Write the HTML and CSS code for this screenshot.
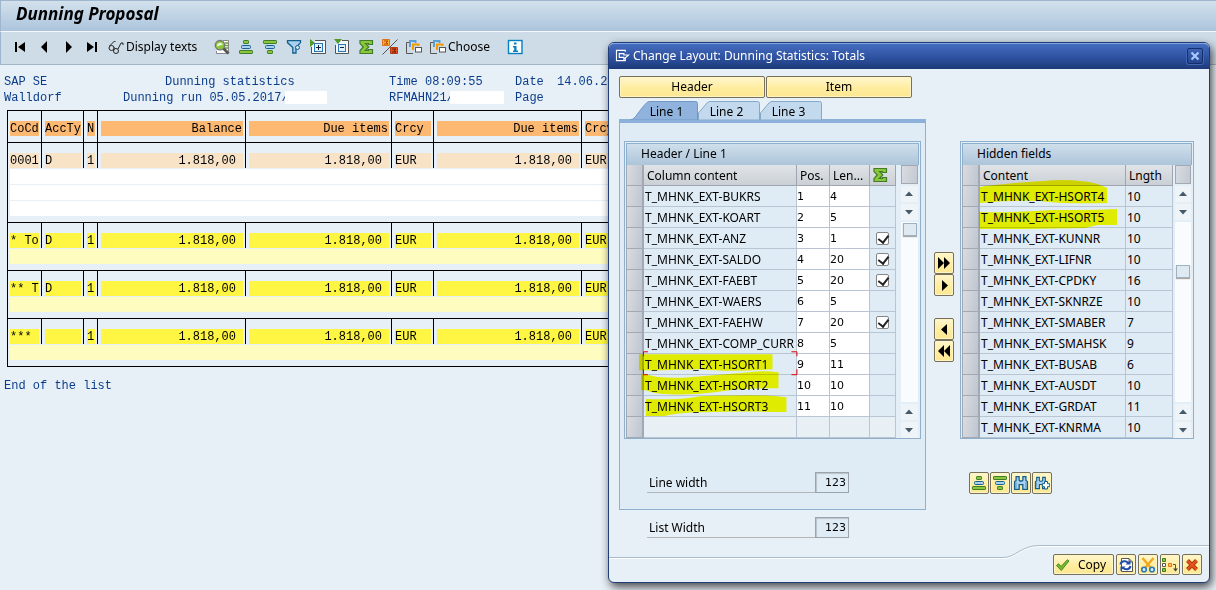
FILE: index.html
```html
<!DOCTYPE html>
<html lang="en">
<head>
<meta charset="utf-8">
<title>Dunning Proposal</title>
<link rel="stylesheet" href="styles.css">
</head>
<body>
<svg class="defs" aria-hidden="true">
  <defs>
    <symbol id="asc" viewBox="0 0 16 16"><g stroke-width="1"><rect x="5.500" y="1.500" width="5" height="3" rx=".6" fill="#8cc63a" stroke="#3f7d2a"/><rect x="3.500" y="6.500" width="9" height="3" rx="1" fill="#a9d0ee" stroke="#13608f"/><rect x="1.500" y="11.500" width="13" height="3" rx=".6" fill="#8cc63a" stroke="#3f7d2a"/></g></symbol>
    <symbol id="desc" viewBox="0 0 16 16"><g stroke-width="1"><rect x="1.500" y="1.500" width="13" height="3" rx=".6" fill="#8cc63a" stroke="#3f7d2a"/><rect x="3.500" y="6.500" width="9" height="3" rx="1" fill="#a9d0ee" stroke="#13608f"/><rect x="5.500" y="11.500" width="5" height="3" rx=".6" fill="#8cc63a" stroke="#3f7d2a"/></g></symbol>
    <symbol id="sum" viewBox="0 0 16 16"><path d="M2 1.500h12.500v4h-4v-.8H7.600l3.200 3.300-3.400 3.400h3.100v-.9h4v4H2v-3L5.300 8 2 4.600z" fill="#8cc63a" stroke="#3f7d2a" stroke-width="1.200"/></symbol>
    <symbol id="layout" viewBox="0 0 16 16"><path d="M3 3.500H.5v11H7" fill="none" stroke="#555"/><path d="M4 8V2H9.500V4" fill="none" stroke="#5aa0d8" stroke-width="2"/><path d="M7 11V5.500H12.500V7" fill="none" stroke="#f39a00" stroke-width="2"/><rect x="9.500" y="8.500" width="6" height="4.500" fill="#fff" stroke="#555"/></symbol>
    <symbol id="bino" viewBox="0 0 16 16"><path d="M1.600 14.400V6.500l1.500-1V1.600h3v3.500l.9.900h2l.9-.9V1.600h3v3.900l1.500 1v7.900H9.800V9.700H6.200v4.700z" fill="#a9d0ee" stroke="#13608f" stroke-width="1.300"/><path d="M3 7v6M13 7v6" stroke="#5b9bcc"/></symbol>
    <symbol id="up" viewBox="0 0 16 16"><path d="M4 10l4-4.500L12 10z" fill="#44596a"/></symbol>
    <symbol id="down" viewBox="0 0 16 16"><path d="M4 6l4 4.500L12 6z" fill="#44596a"/></symbol>
  </defs>
</svg>

<main class="desktop">
  <h1 class="title">Dunning Proposal</h1>
  <nav class="toolbar" aria-label="Application toolbar">
    <button class="tool" aria-label="First column"><svg viewBox="0 0 16 16"><path d="M3 3h2v10H3zM13 3v10L6 8z"/></svg></button>
    <button class="tool" aria-label="Column left"><svg viewBox="0 0 16 16"><path d="M11 2v12L5 8z"/></svg></button>
    <button class="tool" aria-label="Column right"><svg viewBox="0 0 16 16"><path d="M6 2v12l6-6z"/></svg></button>
    <button class="tool" aria-label="Last column"><svg viewBox="0 0 16 16"><path d="M11 3h2v10h-2zM3 3v10l7-5z"/></svg></button>
    <button class="tool wide display"><svg viewBox="0 0 16 16"><g fill="none" stroke="#222" stroke-width="1"><circle cx="3.500" cy="9" r="2.500"/><circle cx="8" cy="12" r="2.500"/><path d="M1.500 7l5-5 1 1M10 10l3-6 2 0v2M6 9l1 0"/></g></svg>Display texts</button>
    <button class="tool" aria-label="Details"><svg viewBox="0 0 16 16"><path d="M9 1.500h5.500v13H2.500V12" fill="#fff" stroke="#888"/><path d="M11 4h3M11 6.500h3M11 9h3" stroke="#62a82d" stroke-width="1.300"/><circle cx="6" cy="6.200" r="4.700" fill="#8cc63a" stroke="#777" stroke-width="1.400"/><path d="M3 7.500a3.200 3.200 0 0 1 6-2z" fill="#e8f5d8"/><path d="M9.500 9.500l5 5" stroke="#555" stroke-width="2.800"/></svg></button>
    <button class="tool" aria-label="Sort ascending"><svg><use href="#asc"/></svg></button>
    <button class="tool" aria-label="Sort descending"><svg><use href="#desc"/></svg></button>
    <button class="tool" aria-label="Filter"><svg viewBox="0 0 16 16"><path d="M1.500 1.600h13v2L10 8.500V14H6.800V8.500L1.500 3.600z" fill="#a9d0ee" stroke="#13608f" stroke-width="1.300"/><circle cx="11.500" cy="8.500" r="2" fill="#cfe2f2" stroke="#13608f"/></svg></button>
    <button class="tool" aria-label="Expand"><svg viewBox="0 0 16 16"><path d="M5 1.500h10.500v13H1.500V8" fill="#f4f8fb" stroke="#555"/><path d="M0 0v8l5-4z" fill="#4f9a2a"/><rect x="4.500" y="4.500" width="8" height="8" fill="#e2f0fb" stroke="#2a75b5"/><path d="M8.500 6v5M6 8.500h5" stroke="#124"/></svg></button>
    <button class="tool" aria-label="Collapse"><svg viewBox="0 0 16 16"><path d="M8 1.500h6.500v13H1.500V6" fill="#f4f8fb" stroke="#555"/><path d="M0 0h8L4 5z" fill="#4f9a2a"/><rect x="4.500" y="5.500" width="7" height="7" fill="#e2f0fb" stroke="#2a75b5"/><path d="M6 8.500h4" stroke="#124"/></svg></button>
    <button class="tool" aria-label="Total"><svg><use href="#sum"/></svg></button>
    <button class="tool" aria-label="Subtotal"><svg viewBox="0 0 16 16"><path d="M.5.500h7v6h-7z" fill="#ffb52b" stroke="#e2701c"/><path d="M2 2h4L4 3.500 6 5H2" fill="none" stroke="#b53a10"/><path d="M8.500 8.500h7v6h-7z" fill="#e2501d" stroke="#b53a10"/><path d="M10 10h4l-2 1.500 2 1.500h-4" fill="none" stroke="#6b1b06"/><path d="M15.500.5L.5 15.500" stroke="#555"/></svg></button>
    <button class="tool" aria-label="Change layout"><svg><use href="#layout"/></svg></button>
    <button class="tool wide choose"><svg><use href="#layout"/></svg>Choose</button>
    <button class="tool" aria-label="Information"><svg viewBox="0 0 16 16"><rect x="1.500" y="1.500" width="13.500" height="13" fill="#fff" stroke="#0780c0" stroke-width="1.400"/><path d="M7 3.500h2.500v2H7zM6 7h3.500v4.500H11V13H6v-1.500h1.200V8.500H6z" fill="#0780c0"/></svg></button>
  </nav>

  <section class="report">
    <div class="report-head">
      <span>SAP SE</span><span class="centered">Dunning statistics</span><span>Time 08:09:55</span><span>Date</span><span>14.06.2017</span>
      <span>Walldorf</span><span>Dunning run 05.05.2017/<i class="blank"></i></span><span>RFMAHN21/<i class="blank long"></i></span><span>Page</span>
    </div>
    <table class="list">
      <colgroup><col class="w-co"><col class="w-cur"><col class="w-n"><col class="w-amt"><col class="w-due"><col class="w-cur"><col class="w-amt"><col class="w-cur"></colgroup>
      <thead>
        <tr class="line head"><th><b>CoCd</b></th><th><b>AccTy</b></th><th><b>N</b></th><th class="num"><b>Balance</b></th><th class="num"><b>Due items</b></th><th><b>Crcy</b></th><th class="num"><b>Due items</b></th><th><b>Crcy</b></th></tr>
      </thead>
      <tbody>
        <tr class="line item"><td><b>0001</b></td><td><b>D</b></td><td><b>1</b></td><td class="num amt"><b>1.818,00</b></td><td class="num amt"><b>1.818,00</b></td><td><b>EUR</b></td><td class="num amt"><b>1.818,00</b></td><td><b>EUR</b></td></tr>
        <tr class="fill"><td colspan="8"><b></b></td></tr>
        <tr class="fill"><td colspan="8"><b></b></td></tr>
        <tr class="fill end"><td colspan="8"><b></b></td></tr>
        <tr class="line total"><td><b>* To</b></td><td><b>D</b></td><td><b>1</b></td><td class="num amt"><b>1.818,00</b></td><td class="num amt"><b>1.818,00</b></td><td><b>EUR</b></td><td class="num amt"><b>1.818,00</b></td><td><b>EUR</b></td></tr>
        <tr class="fill pale end"><td colspan="8"><b></b></td></tr>
        <tr class="line total"><td><b>** T</b></td><td><b>D</b></td><td><b>1</b></td><td class="num amt"><b>1.818,00</b></td><td class="num amt"><b>1.818,00</b></td><td><b>EUR</b></td><td class="num amt"><b>1.818,00</b></td><td><b>EUR</b></td></tr>
        <tr class="fill pale end"><td colspan="8"><b></b></td></tr>
        <tr class="line total"><td><b>***</b></td><td><b></b></td><td><b>1</b></td><td class="num amt"><b>1.818,00</b></td><td class="num amt"><b>1.818,00</b></td><td><b>EUR</b></td><td class="num amt"><b>1.818,00</b></td><td><b>EUR</b></td></tr>
        <tr class="fill pale end"><td colspan="8"><b></b></td></tr>
      </tbody>
    </table>
    <p class="list-end">End of the list</p>
  </section>

  <section class="dialog" role="dialog" aria-labelledby="dlg-title">
    <header class="dialog-bar">
      <svg class="bar-icon" viewBox="0 0 16 14"><path d="M11 3V1.500H1.500v11H11V10M4.500 5v4h5v2l5-4.500H9.500V5z" fill="none" stroke="#fff" stroke-width="1.200"/></svg>
      <h2 id="dlg-title">Change Layout: Dunning Statistics: Totals</h2>
      <button class="close" aria-label="Close"><svg viewBox="0 0 10 10"><path d="M1.500 1.500l7 7M8.500 1.500l-7 7" stroke="#a9c8ff" stroke-width="2.200"/></svg></button>
    </header>
    <div class="dialog-body">
      <div class="left">
        <div class="switches"><button class="gold">Header</button><button class="gold">Item</button></div>
        <div class="tabs" role="tablist">
          <button class="tab active" role="tab" aria-selected="true"><svg viewBox="0 0 68 19" preserveAspectRatio="none"><path d="M.5 19C6 18 8 10 17 1.500Q18 .5 20 .5H65.500Q67.500.5 67.500 2.500V19z" fill="#8fb3dc" stroke="#6f98c4"/></svg><span>Line 1</span></button>
          <button class="tab" role="tab" aria-selected="false"><svg viewBox="0 0 62 19" preserveAspectRatio="none"><path d="M.5 19V12L9 2Q10.500.5 12 .5H59.500Q61.500.5 61.500 2.500V19z" fill="#c3d9ed" stroke="#86a9ca"/></svg><span>Line 2</span></button>
          <button class="tab" role="tab" aria-selected="false"><svg viewBox="0 0 62 19" preserveAspectRatio="none"><path d="M.5 19V12L9 2Q10.500.5 12 .5H59.500Q61.500.5 61.500 2.500V19z" fill="#c3d9ed" stroke="#86a9ca"/></svg><span>Line 3</span></button>
        </div>
        <div class="panel">
          <div class="box">
            <h3>Header / Line 1</h3>
            <div class="box-row">
              <table class="grid shown">
                <colgroup><col class="c-sel"><col><col class="c-pos"><col class="c-len"><col class="c-sum"></colgroup>
                <thead><tr><th class="sel"></th><th>Column content</th><th>Pos.</th><th>Len...</th><th class="chk"><svg class="sum" role="img" aria-label="Total"><use href="#sum"/></svg></th></tr></thead>
                <tbody>
                  <tr><td class="sel"></td><td>T_MHNK_EXT-BUKRS</td><td class="edit"><input aria-label="Position BUKRS" value="1"></td><td class="edit"><input aria-label="Length BUKRS" value="4"></td><td></td></tr>
                  <tr><td class="sel"></td><td>T_MHNK_EXT-KOART</td><td class="edit"><input aria-label="Position KOART" value="2"></td><td class="edit"><input aria-label="Length KOART" value="5"></td><td></td></tr>
                  <tr><td class="sel"></td><td>T_MHNK_EXT-ANZ</td><td class="edit"><input aria-label="Position ANZ" value="3"></td><td class="edit"><input aria-label="Length ANZ" value="1"></td><td class="chk"><input type="checkbox" checked aria-label="Total ANZ"></td></tr>
                  <tr><td class="sel"></td><td>T_MHNK_EXT-SALDO</td><td class="edit"><input aria-label="Position SALDO" value="4"></td><td class="edit"><input aria-label="Length SALDO" value="20"></td><td class="chk"><input type="checkbox" checked aria-label="Total SALDO"></td></tr>
                  <tr><td class="sel"></td><td>T_MHNK_EXT-FAEBT</td><td class="edit"><input aria-label="Position FAEBT" value="5"></td><td class="edit"><input aria-label="Length FAEBT" value="20"></td><td class="chk"><input type="checkbox" checked aria-label="Total FAEBT"></td></tr>
                  <tr><td class="sel"></td><td>T_MHNK_EXT-WAERS</td><td class="edit"><input aria-label="Position WAERS" value="6"></td><td class="edit"><input aria-label="Length WAERS" value="5"></td><td></td></tr>
                  <tr><td class="sel"></td><td>T_MHNK_EXT-FAEHW</td><td class="edit"><input aria-label="Position FAEHW" value="7"></td><td class="edit"><input aria-label="Length FAEHW" value="20"></td><td class="chk"><input type="checkbox" checked aria-label="Total FAEHW"></td></tr>
                  <tr><td class="sel"></td><td>T_MHNK_EXT-COMP_CURR</td><td class="edit"><input aria-label="Position COMP_CURR" value="8"></td><td class="edit"><input aria-label="Length COMP_CURR" value="5"></td><td></td></tr>
                  <tr><td class="sel"></td><td>T_MHNK_EXT-HSORT1</td><td class="edit"><input aria-label="Position HSORT1" value="9"></td><td class="edit"><input aria-label="Length HSORT1" value="11"></td><td></td></tr>
                  <tr><td class="sel"></td><td>T_MHNK_EXT-HSORT2</td><td class="edit"><input aria-label="Position HSORT2" value="10"></td><td class="edit"><input aria-label="Length HSORT2" value="10"></td><td></td></tr>
                  <tr><td class="sel"></td><td>T_MHNK_EXT-HSORT3</td><td class="edit"><input aria-label="Position HSORT3" value="11"></td><td class="edit"><input aria-label="Length HSORT3" value="10"></td><td></td></tr>
                  <tr class="empty"><td class="sel"></td><td></td><td></td><td></td><td></td></tr>
                </tbody>
              </table>
              <div class="scroll">
                <div class="corner"></div>
                <button aria-label="Scroll up"><svg><use href="#up"/></svg></button><button aria-label="Scroll down"><svg><use href="#down"/></svg></button>
                <div class="track"><div class="thumb"></div></div>
                <button aria-label="Previous row"><svg><use href="#up"/></svg></button><button aria-label="Next row"><svg><use href="#down"/></svg></button>
              </div>
            </div>
            <svg class="marker" viewBox="624 141 298 299" aria-hidden="true"><path d="M639 355H773V370Q730 373 700 370L660 371H639z"/><path d="M641 375H646Q660 380 690 378L750 373Q765 371 779 373V389Q740 389 715 393Q690 396 670 395Q655 395 646 391H641z"/><path d="M646 400Q680 401 700 397Q730 396 750 396Q770 396 787 398V413Q740 412 715 413Q680 413 665 417H646z"/></svg>
            <svg class="focus" viewBox="624 141 298 299" aria-hidden="true"><path d="M643.500 357V352.500H648M792 352.500H797.500V357M797.500 370V375.500H792M648 375.500H643.500V370" fill="none" stroke="#e00000"/></svg>
          </div>
          <div class="field"><label for="line-width">Line width</label><input id="line-width" value="123" readonly></div>
        </div>
        <div class="field outer"><label for="list-width">List Width</label><input id="list-width" value="123" readonly></div>
      </div>

      <div class="movers">
        <button class="gold ico" aria-label="Hide all"><svg viewBox="0 0 16 16"><path d="M2 2v12l6-6zM8 2v12l6-6z"/></svg></button>
        <button class="gold ico" aria-label="Hide field"><svg viewBox="0 0 16 16"><path d="M6 3v11l6-5.500z"/></svg></button>
        <button class="gold ico apart" aria-label="Show field"><svg viewBox="0 0 16 16"><path d="M11 3v11L5 8.500z"/></svg></button>
        <button class="gold ico" aria-label="Show all"><svg viewBox="0 0 16 16"><path d="M8 2v12L2 8zM14 2v12L8 8z"/></svg></button>
      </div>

      <div class="right">
        <div class="box">
          <h3>Hidden fields</h3>
          <div class="box-row">
            <table class="grid">
              <colgroup><col class="c-sel"><col><col class="c-lng"></colgroup>
              <thead><tr><th class="sel"></th><th>Content</th><th>Lngth</th></tr></thead>
              <tbody>
                <tr><td class="sel"></td><td>T_MHNK_EXT-HSORT4</td><td>10</td></tr>
                <tr><td class="sel"></td><td>T_MHNK_EXT-HSORT5</td><td>10</td></tr>
                <tr><td class="sel"></td><td>T_MHNK_EXT-KUNNR</td><td>10</td></tr>
                <tr><td class="sel"></td><td>T_MHNK_EXT-LIFNR</td><td>10</td></tr>
                <tr><td class="sel"></td><td>T_MHNK_EXT-CPDKY</td><td>16</td></tr>
                <tr><td class="sel"></td><td>T_MHNK_EXT-SKNRZE</td><td>10</td></tr>
                <tr><td class="sel"></td><td>T_MHNK_EXT-SMABER</td><td>7</td></tr>
                <tr><td class="sel"></td><td>T_MHNK_EXT-SMAHSK</td><td>9</td></tr>
                <tr><td class="sel"></td><td>T_MHNK_EXT-BUSAB</td><td>6</td></tr>
                <tr><td class="sel"></td><td>T_MHNK_EXT-AUSDT</td><td>10</td></tr>
                <tr><td class="sel"></td><td>T_MHNK_EXT-GRDAT</td><td>11</td></tr>
                <tr><td class="sel"></td><td>T_MHNK_EXT-KNRMA</td><td>10</td></tr>
              </tbody>
            </table>
            <div class="scroll near">
              <div class="corner"></div>
              <button aria-label="Scroll up"><svg><use href="#up"/></svg></button><button aria-label="Scroll down"><svg><use href="#down"/></svg></button>
              <div class="track lower"><div class="thumb"></div></div>
              <button aria-label="Previous row"><svg><use href="#up"/></svg></button><button aria-label="Next row"><svg><use href="#down"/></svg></button>
            </div>
          </div>
          <svg class="marker" viewBox="960 141 234 299" aria-hidden="true"><path d="M980 187L985 186L1015 183L1043 181Q1065 179 1080 181Q1096 182 1107 188V203Q1060 204 1040 201Q1010 200 980 203z"/><path d="M979 212Q1000 213 1035 211L1055 210L1090 210L1117 209V225H1098L1085 228L1025 229H979z"/></svg>
        </div>
        <div class="finders">
          <button class="gold ico" aria-label="Sort ascending"><svg><use href="#asc"/></svg></button>
          <button class="gold ico" aria-label="Sort descending"><svg><use href="#desc"/></svg></button>
          <button class="gold ico" aria-label="Find"><svg><use href="#bino"/></svg></button>
          <button class="gold ico" aria-label="Find next"><svg viewBox="0 0 16 16"><use href="#bino" width="14" height="16"/><path d="M10.500 6.500h3v2.200h2.200v3h-2.200v2.200h-3v-2.200H8.300v-3h2.200z" fill="#fff" stroke="#13608f"/></svg></button>
        </div>
      </div>
    </div>
    <footer class="dialog-foot">
      <div class="edge" aria-hidden="true"><i class="low"></i><svg viewBox="0 0 36 14"><path d="M0 13.500C13 13.500 18 1.500 36 1.500" fill="none" stroke="#fff"/><path d="M0 12.500C13 12.500 18 .5 36 .5" fill="none" stroke="#a9bac9"/></svg><i class="high"></i></div>
      <button class="gold copy"><svg viewBox="0 0 16 16"><path d="M1.500 8.500l2.200-1.700 2.300 2.700 6.500-6.800L14 4 6.300 13.500z" fill="#77b82e" stroke="#4a8a22"/></svg>Copy</button>
      <button class="gold ico" aria-label="Refresh"><svg viewBox="0 0 16 16"><path d="M3.500 1.500H11l3.500 3.500v9.500h-11z" fill="#fff" stroke="#555"/><path d="M11 1.500V5h3.500" fill="none" stroke="#555"/><path d="M2.500 7.500C3 4 8 3 10 6M12.500 9C12 12.500 7 13.500 5 10.500" fill="none" stroke="#1f4fa8" stroke-width="2"/><path d="M7.500 7.500H12.500V3zM7.500 9.500H2.500V14z" fill="#1f4fa8"/></svg></button>
      <button class="gold ico" aria-label="Cut"><svg viewBox="0 0 16 16"><path d="M2.500 1l8.500 10M13.500 1L5 11" stroke="#f2a81d" stroke-width="2.400"/><circle cx="4" cy="12.500" r="2.300" fill="#dcecf8" stroke="#2a7ab8" stroke-width="1.600"/><circle cx="12" cy="12.500" r="2.300" fill="#dcecf8" stroke="#2a7ab8" stroke-width="1.600"/></svg></button>
      <button class="gold ico" aria-label="Move"><svg viewBox="0 0 16 16"><g fill="#8cc63a" stroke="#3f7d2a"><path d="M.5 1.500h3v3h-3zM.5 11.500h3v3h-3z"/></g><path d="M.5 6.500h3v3h-3z" fill="#fff" stroke="#555"/><path d="M6.500 6.500h3v3h-3z" fill="#ffd24d" stroke="#e2701c"/><path d="M11 7.500h2.500V13" fill="none" stroke="#555"/><path d="M11 11.500h5l-2.500 3z" fill="#444"/></svg></button>
      <button class="gold ico" aria-label="Cancel"><svg viewBox="0 0 16 16"><path d="M3.500 3.500l9 9M12.500 3.500l-9 9" stroke="#a8320c" stroke-width="4"/><path d="M3.500 3.500l9 9M12.500 3.500l-9 9" stroke="#e5541b" stroke-width="2.400"/></svg></button>
    </footer>
  </section>
</main>
</body>
</html>
```
FILE: styles.css
```css
* { box-sizing: border-box; }
body { margin: 0; font-family: "Noto Sans", sans-serif; font-size: 12px; line-height: 16px; color: #000; background: #e8f0f7; }
button, input { font: inherit; color: inherit; margin: 0; padding: 0; border: 0; background: none; border-radius: 0; }
h1, h2, h3, p { margin: 0; font-weight: 400; }
.defs { position: absolute; width: 0; height: 0; }
.desktop { position: relative; min-height: 100vh; overflow: hidden; }

.title { height: 31px; padding: 0 15px; border-top: 1px solid #9fb6cf; border-left: 1px solid #9fb6cf; background: linear-gradient(#d3e1ec, #abc4dc); font-family: "DejaVu Sans", sans-serif; font-size: 15px; line-height: 27px; font-weight: 700; font-style: italic; }
.title { font-family: "Noto Sans", sans-serif; font-size: 17px; line-height: 26px; }
.toolbar { display: flex; align-items: center; height: 34px; padding: 0 7px 3px; border-top: 1px solid #f2f7fb; border-bottom: 1px solid #a3b6c8; border-left: 1px solid #9fb6cf; background: #cedce7; }
.tool { display: flex; align-items: center; justify-content: center; width: 24px; height: 24px; white-space: nowrap; }
.tool svg { flex: none; width: 16px; height: 16px; }
.wide { justify-content: flex-start; gap: 2px; }
.display { width: 106px; padding-left: 4px; }
.choose { width: 77px; padding-left: 4px; gap: 2px; }

.report { padding: 9px 4px; font-family: "Liberation Mono", monospace; }
.report-head { display: grid; grid-template-columns: 119px 266px 126px 42px auto; line-height: 16px; color: #0b3d8c; white-space: nowrap; }
.report-head .centered { padding-left: 42px; }
.blank { display: inline-block; width: 42px; height: 13px; margin-left: -4px; background: #fff; vertical-align: middle; }
.blank.long { width: 54px; }
.list { width: 614px; margin: 4px 0 0 3px; table-layout: fixed; border-spacing: 0; border-bottom: 1px solid #000; text-align: left; white-space: nowrap; }
.w-co { width: 34px; } .w-cur { width: 42px; } .w-n { width: 14px; } .w-amt { width: 148px; } .w-due { width: 146px; }
.list th, .list td { padding: 10px 2px 0 3px; border-left: 1px solid #000; }
.list tr > :first-child { padding-left: 2px; }
.line > * { border-top: 1px solid #000; }
.list b { display: block; height: 15px; padding: 0 1px 0 0; font-weight: 400; line-height: 17px; }
.list .head > * { padding-bottom: 6px; }
.head b { background: #fdb972; }
.item b { background: #f8e3c7; }
.total b { background: #fef643; }
.num { text-align: right; }
.list .amt b { padding-right: 7px; }
.list .fill td { padding: 1px 0 0 2px; }
.list .end td { padding-bottom: 6px; }
.list .fill b { background: #fff; }
.list .pale b { background: #fffcbf; }
.list-end { padding-top: 11px; color: #0b3d8c; }

.dialog { position: absolute; left: 608px; top: 42px; width: 602px; border: 1px solid #1f3c78; border-radius: 6px; background: #e8f0f7; box-shadow: 2px 4px 10px rgba(0, 0, 0, .7); }
.dialog-bar { display: flex; align-items: center; height: 26px; padding: 0 6px 2px; border-top: 1px solid #7fa6e0; border-radius: 5px 5px 0 0; background: linear-gradient(#466cc0, #2c4f9c 60%, #1d3a78); color: #fff; }
.dialog-bar h2 { flex: 1; padding-left: 3px; font-size: 12px; }
.bar-icon { width: 15px; height: 13px; }
.close { display: flex; align-items: center; justify-content: center; width: 16px; height: 16px; border: 1px solid #14306c; border-radius: 2px; box-shadow: 0 0 0 1px #4067b4; }
.close svg { width: 10px; height: 10px; }
.dialog-body { display: flex; padding: 7px 15px 0 10px; }
.left { flex: none; width: 307px; }
.gold { display: flex; align-items: center; justify-content: center; height: 22px; border: 1px solid #77705a; border-radius: 2px; background: linear-gradient(#fff6cd, #ffec9c 60%, #fbe793); box-shadow: inset 0 0 0 1px #fff5c4; }
.switches { display: flex; gap: 1px; padding-right: 14px; }
.switches .gold { flex: 1; }
.ico { flex: none; width: 20px; }
.ico svg { width: 16px; height: 16px; }
.tabs { display: flex; height: 18px; margin-top: 3px; padding-left: 11px; }
.tab { position: relative; width: 62px; height: 19px; padding: 2px 5px 0 0; }
.tab.active { width: 68px; z-index: 1; padding: 2px 0 0 5px; }
.tab svg { position: absolute; left: 0; top: 0; width: 100%; height: 19px; }
.tab span { position: relative; }
.panel { padding: 18px 4px 16px; border: 1px solid #8fb0cf; border-top: 4px solid #8bb0da; background: #dfebf5; }
.box { position: relative; padding: 1px 1px 0; border: 1px solid #8fb0cc; background: #e4eef6; }
.box h3 { height: 22px; padding-left: 14px; border: 1px solid #8fb0cc; border-bottom: 0; background: linear-gradient(#cfdfeb, #adc5da); font-size: 12px; line-height: 19px; }
.box-row { display: flex; }
.grid { flex: 1; min-width: 0; table-layout: fixed; border-spacing: 0; text-align: left; white-space: nowrap; }
.c-sel { width: 18px; } .c-pos { width: 33px; } .c-len { width: 40px; } .c-sum { width: 26px; } .c-lng { width: 47px; }
.grid th, .grid td { height: 21px; padding: 2px 0 0 1px; border-right: 1px solid #b9c5d3; border-bottom: 1px solid #b9c5d3; font-weight: 400; line-height: 18px; background: #dfebf5; }
.grid th { padding-left: 3px; border-color: #9ca5b0; background: linear-gradient(#e0e4e8, #cbd0d6); }
.grid .sel { border: 1px solid #a2a9b4; border-width: 0 2px 1px 1px; background: linear-gradient(100deg, #d9dce1, #bfc5cf); }
.grid td.edit { padding: 0; background: #fff; }
.edit input { display: block; width: 100%; height: 20px; padding-top: 1px; font-family: "DejaVu Sans", sans-serif; font-size: 11px; }
.grid .empty td:not(.sel) { background: #e8eff5; }
.grid .chk { padding: 0; text-align: center; }
.sum { display: block; width: 16px; height: 16px; margin-left: 2px; }
.chk input { appearance: none; display: block; width: 13px; height: 13px; margin: 0 auto; border: 1px solid #858585; border-radius: 2px; background: #fff; }
.chk input:checked::after { content: ""; display: block; width: 5px; height: 8px; margin: 0 0 0 3px; border: solid #222; border-width: 0 2px 2px 0; transform: rotate(38deg); }
.scroll { display: flex; flex-direction: column; gap: 2px; width: 17px; margin: 0 1px 0 5px; }
.scroll.near { width: 16px; margin-left: 2px; }
.scroll button { height: 16px; background: #eff4f8; }
.scroll svg { display: block; width: 16px; height: 16px; }
.corner { height: 19px; border: 1px solid #a2a9b4; background: linear-gradient(100deg, #d9dce1, #c3c9d2); }
.track { flex: 1; padding-top: 1px; background: #f9fbfc; }
.track.lower { padding-top: 43px; }
.thumb { width: 14px; height: 13px; margin: 0 auto; border: 1px solid #9fb0c0; background: #dfe9f2; box-shadow: 0 1px 1px #aaa; }
.marker, .focus { position: absolute; left: -1px; top: -1px; width: calc(100% + 2px); pointer-events: none; }
.marker { fill: #ff0; mix-blend-mode: multiply; }
.field { display: flex; align-items: stretch; height: 21px; margin: 33px 72px 0 23px; }
.field label { flex: 1; padding-left: 2px; border-bottom: 1px solid #b3b5b8; line-height: 22px; }
.field input { width: 34px; padding-right: 2px; border: 1px solid #9ca3aa; background: #dfebf5; box-shadow: inset 1px 1px 1px #b9c2cb; font-family: "DejaVu Sans", sans-serif; font-size: 11px; text-align: right; }
.outer { margin: 7px 77px 0 28px; }
.movers { display: flex; flex-direction: column; flex: none; margin: 176px 6px 0 8px; }
.movers .apart { margin-top: 22px; }
.right { flex: 1; min-width: 0; padding-top: 65px; }
.finders { display: flex; gap: 1px; margin: 33px 0 0 9px; }
.dialog-foot { position: relative; display: flex; justify-content: flex-end; gap: 2px; margin-top: 7px; padding: 9px 7px 7px; }
.dialog-foot .gold { position: relative; height: 21px; }
.edge { position: absolute; left: 0; right: 0; top: 0; display: flex; height: 14px; }
.edge svg { width: 36px; height: 14px; }
.edge .low { flex: 1; border-bottom: 1px solid #fff; box-shadow: inset 0 -1px #a9bac9; }
.edge .high { width: 170px; border-top: 1px solid #a9bac9; box-shadow: inset 0 1px #fff; }
.gold.copy { width: 61px; gap: 7px; justify-content: flex-start; padding-left: 1px; }
.copy svg { width: 16px; height: 16px; }
```
